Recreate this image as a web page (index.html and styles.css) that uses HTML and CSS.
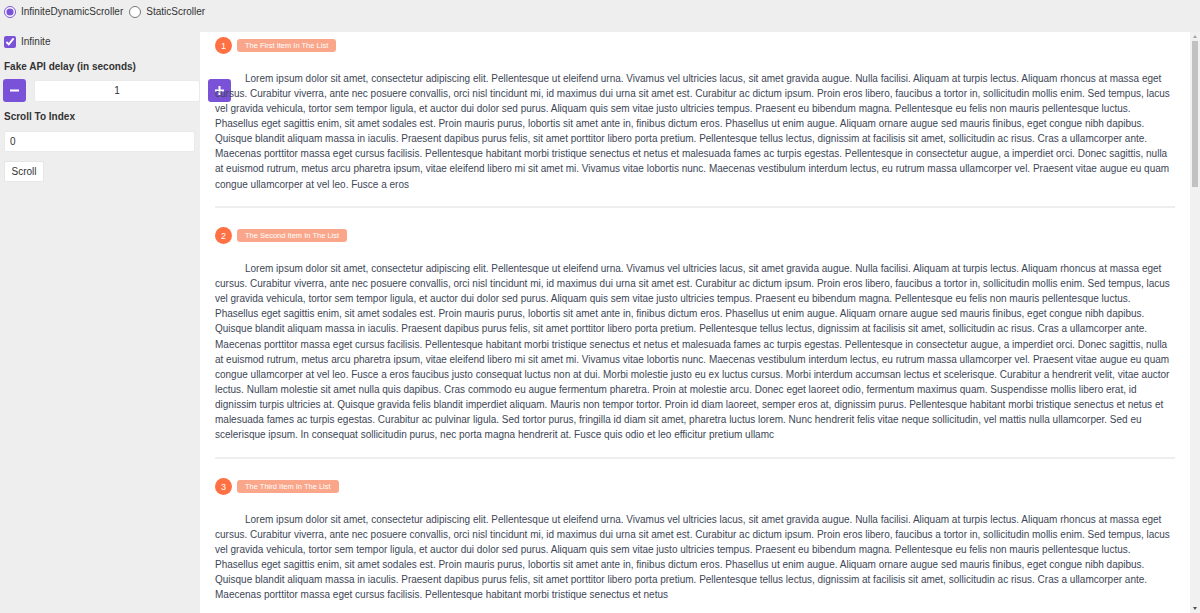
FILE: index.html
```html
<!DOCTYPE html>
<html lang="en">
<head>
<meta charset="utf-8">
<title>Scroller demo</title>
<link rel="stylesheet" href="styles.css">
</head>
<body>
<div class="app">
  <div class="modes">
    <label class="mode"><input type="radio" name="mode" class="radio" checked> InfiniteDynamicScroller</label>
    <label class="mode"><input type="radio" name="mode" class="radio"> StaticScroller</label>
  </div>
  <div class="layout">
    <aside class="sidebar">
      <label class="check-row"><input type="checkbox" class="check" checked> Infinite</label>
      <div class="field-label first">Fake API delay (in seconds)</div>
      <div class="stepper">
        <button class="step-btn" type="button" aria-label="decrease"><svg width="9" height="9" viewBox="0 0 9 9"><rect x="0" y="3.5" width="9" height="2" fill="#fff"/></svg></button>
        <input class="step-input" type="text" value="1">
        <button class="step-btn plus" type="button" aria-label="increase"><svg width="9" height="9" viewBox="0 0 9 9"><rect x="0" y="3.5" width="9" height="2" fill="#fff"/><rect x="3.5" y="0" width="2" height="9" fill="#fff"/></svg></button>
      </div>
      <div class="field-label">Scroll To Index</div>
      <input class="index-input" type="text" value="0">
      <button class="scroll-btn" type="button">Scroll</button>
    </aside>
    <section class="pane">
      <main class="list">
        <article class="item">
          <div class="item-head"><span class="num">1</span><span class="tag">The First Item In The List</span></div>
          <p class="item-text">Lorem ipsum dolor sit amet, consectetur adipiscing elit. Pellentesque ut eleifend urna. Vivamus vel ultricies lacus, sit amet gravida augue. Nulla facilisi. Aliquam at turpis lectus. Aliquam rhoncus at massa eget cursus. Curabitur viverra, ante nec posuere convallis, orci nisl tincidunt mi, id maximus dui urna sit amet est. Curabitur ac dictum ipsum. Proin eros libero, faucibus a tortor in, sollicitudin mollis enim. Sed tempus, lacus vel gravida vehicula, tortor sem tempor ligula, et auctor dui dolor sed purus. Aliquam quis sem vitae justo ultricies tempus. Praesent eu bibendum magna. Pellentesque eu felis non mauris pellentesque luctus. Phasellus eget sagittis enim, sit amet sodales est. Proin mauris purus, lobortis sit amet ante in, finibus dictum eros. Phasellus ut enim augue. Aliquam ornare augue sed mauris finibus, eget congue nibh dapibus. Quisque blandit aliquam massa in iaculis. Praesent dapibus purus felis, sit amet porttitor libero porta pretium. Pellentesque tellus lectus, dignissim at facilisis sit amet, sollicitudin ac risus. Cras a ullamcorper ante. Maecenas porttitor massa eget cursus facilisis. Pellentesque habitant morbi tristique senectus et netus et malesuada fames ac turpis egestas. Pellentesque in consectetur augue, a imperdiet orci. Donec sagittis, nulla at euismod rutrum, metus arcu pharetra ipsum, vitae eleifend libero mi sit amet mi. Vivamus vitae lobortis nunc. Maecenas vestibulum interdum lectus, eu rutrum massa ullamcorper vel. Praesent vitae augue eu quam congue ullamcorper at vel leo. Fusce a eros</p>
        </article>
        <article class="item">
          <div class="item-head"><span class="num">2</span><span class="tag">The Second Item In The List</span></div>
          <p class="item-text">Lorem ipsum dolor sit amet, consectetur adipiscing elit. Pellentesque ut eleifend urna. Vivamus vel ultricies lacus, sit amet gravida augue. Nulla facilisi. Aliquam at turpis lectus. Aliquam rhoncus at massa eget cursus. Curabitur viverra, ante nec posuere convallis, orci nisl tincidunt mi, id maximus dui urna sit amet est. Curabitur ac dictum ipsum. Proin eros libero, faucibus a tortor in, sollicitudin mollis enim. Sed tempus, lacus vel gravida vehicula, tortor sem tempor ligula, et auctor dui dolor sed purus. Aliquam quis sem vitae justo ultricies tempus. Praesent eu bibendum magna. Pellentesque eu felis non mauris pellentesque luctus. Phasellus eget sagittis enim, sit amet sodales est. Proin mauris purus, lobortis sit amet ante in, finibus dictum eros. Phasellus ut enim augue. Aliquam ornare augue sed mauris finibus, eget congue nibh dapibus. Quisque blandit aliquam massa in iaculis. Praesent dapibus purus felis, sit amet porttitor libero porta pretium. Pellentesque tellus lectus, dignissim at facilisis sit amet, sollicitudin ac risus. Cras a ullamcorper ante. Maecenas porttitor massa eget cursus facilisis. Pellentesque habitant morbi tristique senectus et netus et malesuada fames ac turpis egestas. Pellentesque in consectetur augue, a imperdiet orci. Donec sagittis, nulla at euismod rutrum, metus arcu pharetra ipsum, vitae eleifend libero mi sit amet mi. Vivamus vitae lobortis nunc. Maecenas vestibulum interdum lectus, eu rutrum massa ullamcorper vel. Praesent vitae augue eu quam congue ullamcorper at vel leo. Fusce a eros faucibus justo consequat luctus non at dui. Morbi molestie justo eu ex luctus cursus. Morbi interdum accumsan lectus et scelerisque. Curabitur a hendrerit velit, vitae auctor lectus. Nullam molestie sit amet nulla quis dapibus. Cras commodo eu augue fermentum pharetra. Proin at molestie arcu. Donec eget laoreet odio, fermentum maximus quam. Suspendisse mollis libero erat, id dignissim turpis ultricies at. Quisque gravida felis blandit imperdiet aliquam. Mauris non tempor tortor. Proin id diam laoreet, semper eros at, dignissim purus. Pellentesque habitant morbi tristique senectus et netus et malesuada fames ac turpis egestas. Curabitur ac pulvinar ligula. Sed tortor purus, fringilla id diam sit amet, pharetra luctus lorem. Nunc hendrerit felis vitae neque sollicitudin, vel mattis nulla ullamcorper. Sed eu scelerisque ipsum. In consequat sollicitudin purus, nec porta magna hendrerit at. Fusce quis odio et leo efficitur pretium ullamc</p>
        </article>
        <article class="item">
          <div class="item-head"><span class="num">3</span><span class="tag">The Third Item In The List</span></div>
          <p class="item-text">Lorem ipsum dolor sit amet, consectetur adipiscing elit. Pellentesque ut eleifend urna. Vivamus vel ultricies lacus, sit amet gravida augue. Nulla facilisi. Aliquam at turpis lectus. Aliquam rhoncus at massa eget cursus. Curabitur viverra, ante nec posuere convallis, orci nisl tincidunt mi, id maximus dui urna sit amet est. Curabitur ac dictum ipsum. Proin eros libero, faucibus a tortor in, sollicitudin mollis enim. Sed tempus, lacus vel gravida vehicula, tortor sem tempor ligula, et auctor dui dolor sed purus. Aliquam quis sem vitae justo ultricies tempus. Praesent eu bibendum magna. Pellentesque eu felis non mauris pellentesque luctus. Phasellus eget sagittis enim, sit amet sodales est. Proin mauris purus, lobortis sit amet ante in, finibus dictum eros. Phasellus ut enim augue. Aliquam ornare augue sed mauris finibus, eget congue nibh dapibus. Quisque blandit aliquam massa in iaculis. Praesent dapibus purus felis, sit amet porttitor libero porta pretium. Pellentesque tellus lectus, dignissim at facilisis sit amet, sollicitudin ac risus. Cras a ullamcorper ante. Maecenas porttitor massa eget cursus facilisis. Pellentesque habitant morbi tristique senectus et netus</p>
        </article>
      </main>
      <div class="scrollbar" aria-hidden="true">
        <span class="sb-arrow up"></span>
        <span class="sb-track"><span class="sb-thumb"></span></span>
        <span class="sb-arrow down"></span>
      </div>
    </section>
  </div>
</div>
</body>
</html>
```

FILE: styles.css
```css
* {
  box-sizing: border-box;
}

html, body {
  margin: 0;
  height: 100%;
}

body {
  background: #eeeeee;
  font-family: "Liberation Sans", Arial, Helvetica, sans-serif;
  font-size: 10px;
  color: #333333;
  overflow: hidden;
}

.app {
  display: flex;
  flex-direction: column;
  height: 100%;
}

.modes {
  display: flex;
  align-items: center;
  gap: 6px;
  height: 32px;
  padding: 1px 4px 9px;
  flex-shrink: 0;
}

.mode {
  display: flex;
  align-items: center;
  gap: 5px;
  line-height: 12px;
}

.radio {
  width: 12px;
  height: 12px;
  margin: 0;
  accent-color: #7a52d8;
}

.layout {
  display: flex;
  flex: 1;
  min-height: 0;
}

.sidebar {
  width: 200px;
  flex-shrink: 0;
  padding: 4px 4px 0;
}

.check-row {
  display: flex;
  align-items: center;
  gap: 5px;
  height: 12px;
  line-height: 12px;
}

.check {
  width: 12px;
  height: 12px;
  margin: 0;
  accent-color: #7a52d8;
}

.field-label {
  font-weight: bold;
  line-height: 12px;
  margin: 9px 0 8px;
}

.field-label.first {
  margin-top: 12.5px;
  margin-bottom: 6.5px;
}

.stepper {
  display: flex;
  align-items: center;
  gap: 8px;
  width: 228px;
  margin-left: -1px;
}

.step-btn {
  width: 23px;
  height: 23px;
  padding: 0;
  border: none;
  border-radius: 3px;
  background: #7a52d8;
  display: flex;
  align-items: center;
  justify-content: center;
  flex-shrink: 0;
}

.step-btn.plus {
  position: relative;
}

.step-input {
  width: 166px;
  height: 22px;
  border: 1px solid #eaeaea;
  border-radius: 2px;
  background: #ffffff;
  text-align: center;
  font-family: inherit;
  font-size: 10px;
  color: #333333;
  padding: 0;
  outline: none;
}

.index-input {
  display: block;
  width: 191px;
  height: 21px;
  border: 1px solid #eaeaea;
  border-radius: 2px;
  background: #ffffff;
  font-family: inherit;
  font-size: 10px;
  color: #333333;
  padding: 0 5px;
  outline: none;
}

.scroll-btn {
  display: block;
  margin-top: 9px;
  width: 40px;
  height: 21px;
  padding: 0;
  border: 1px solid #e6e6e6;
  border-radius: 2px;
  background: #ffffff;
  font-family: inherit;
  font-size: 10px;
  color: #333333;
}

.pane {
  flex: 1;
  min-width: 0;
  display: flex;
  background: #ffffff;
}

.list {
  flex: 1;
  min-width: 0;
  height: 100%;
  overflow-y: auto;
  scrollbar-width: none;
  padding: 0 15px;
}

.scrollbar {
  width: 10px;
  flex-shrink: 0;
  display: flex;
  flex-direction: column;
  background: #f1f1f1;
}

.sb-arrow {
  height: 9px;
  display: flex;
  justify-content: center;
  align-items: center;
}

.sb-arrow::before {
  content: "";
  width: 0;
  height: 0;
  border-left: 2.5px solid transparent;
  border-right: 2.5px solid transparent;
}

.sb-arrow.up::before {
  border-bottom: 3px solid #a3a3a3;
}

.sb-arrow.down::before {
  border-top: 3px solid #505050;
}

.sb-track {
  flex: 1;
  padding: 0 2px 0 2px;
}

.sb-thumb {
  display: block;
  height: 146px;
  background: #c1c1c1;
}

.item {
  padding: 5px 0 14.5px;
  border-bottom: 2px solid #eeeeee;
  margin-bottom: 14px;
}

.item-head {
  display: flex;
  align-items: center;
  gap: 5px;
  height: 17px;
}

.num {
  width: 17px;
  height: 17px;
  border-radius: 50%;
  background: #ff7043;
  color: #ffffff;
  font-size: 9px;
  display: flex;
  align-items: center;
  justify-content: center;
}

.tag {
  height: 13px;
  line-height: 13px;
  padding: 0 8px;
  border-radius: 3px;
  background: #f9a68b;
  color: #ffffff;
  font-size: 7.5px;
}

.item-text {
  position: relative;
  z-index: 1;
  margin: 16.5px 0 0;
  text-indent: 30px;
  font-size: 10px;
  line-height: 15.15px;
  color: #3d4656;
}
```
